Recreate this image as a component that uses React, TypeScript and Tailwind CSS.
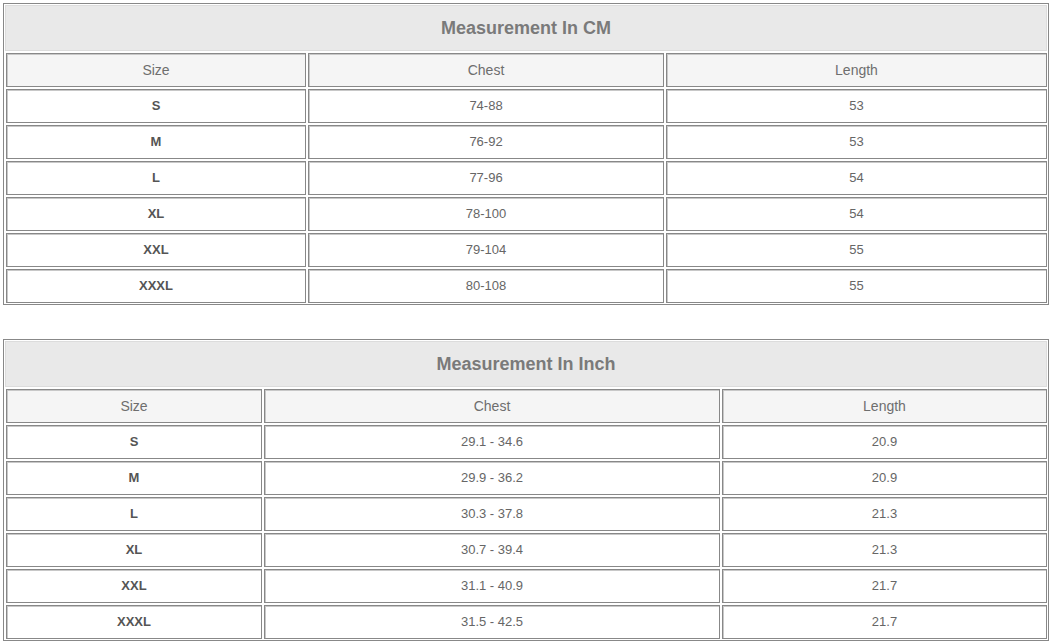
import React from "react";

type Row = [string, string, string];

const cm: Row[] = [
  ["S", "74-88", "53"],
  ["M", "76-92", "53"],
  ["L", "77-96", "54"],
  ["XL", "78-100", "54"],
  ["XXL", "79-104", "55"],
  ["XXXL", "80-108", "55"],
];

const inch: Row[] = [
  ["S", "29.1 - 34.6", "20.9"],
  ["M", "29.9 - 36.2", "20.9"],
  ["L", "30.3 - 37.8", "21.3"],
  ["XL", "30.7 - 39.4", "21.3"],
  ["XXL", "31.1 - 40.9", "21.7"],
  ["XXXL", "31.5 - 42.5", "21.7"],
];

const cell =
  "h-[34px] flex items-center justify-center border border-[#888] shadow-[inset_1px_1px_0_#c8c8c8]";

function SizeTable({
  title,
  rows,
  cols,
}: {
  title: string;
  rows: Row[];
  cols: string;
}) {
  return (
    <div className="w-[1046px] border border-[#888] p-[1px] bg-white">
      <div className="h-[46px] flex items-center justify-center bg-[#e9e9e9] border border-[#dcdcdc] text-[18px] font-bold text-[#7a7a7a]">
        {title}
      </div>
      <div className={`grid ${cols} gap-[2px] pl-[1px] pt-[2px]`}>
        {["Size", "Chest", "Length"].map((h) => (
          <div key={h} className={`${cell} bg-[#f5f5f5] text-[14px] text-[#6e6e6e]`}>
            {h}
          </div>
        ))}
        {rows.map((r) => (
          <React.Fragment key={r[0]}>
            <div className={`${cell} bg-white text-[13px] font-bold text-[#555]`}>{r[0]}</div>
            <div className={`${cell} bg-white text-[13px] text-[#666]`}>{r[1]}</div>
            <div className={`${cell} bg-white text-[13px] text-[#666]`}>{r[2]}</div>
          </React.Fragment>
        ))}
      </div>
    </div>
  );
}

export default function App() {
  return (
    <div
      className="w-[1052px] h-[644px] bg-white pt-[3px] pl-[3px] flex flex-col gap-[34px] overflow-hidden"
      style={{ fontFamily: '"Liberation Sans", Arial, sans-serif' }}
    >
      <SizeTable title="Measurement In CM" rows={cm} cols="grid-cols-[300px_356px_381px]" />
      <SizeTable title="Measurement In Inch" rows={inch} cols="grid-cols-[256px_456px_325px]" />
    </div>
  );
}
